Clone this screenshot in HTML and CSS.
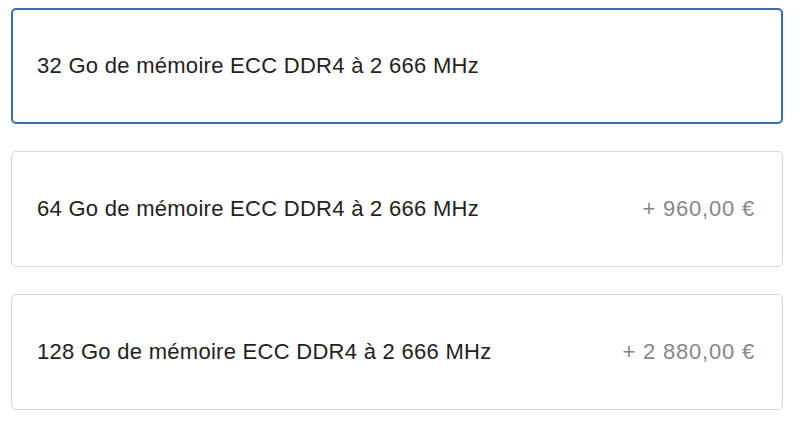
FILE: index.html
```html
<!DOCTYPE html>
<html lang="fr">
<head>
    <meta charset="UTF-8">
    <meta name="viewport" content="width=device-width, initial-scale=1.0">
    <title>Mémoire</title>
    <link rel="stylesheet" href="styles.css">
</head>
<body>
    <div class="options">
        <label class="option selected">
            <span class="name">32 Go de mémoire ECC DDR4 à 2 666 MHz</span>
        </label>
        <label class="option">
            <span class="name">64 Go de mémoire ECC DDR4 à 2 666 MHz</span>
            <span class="price">+ 960,00 €</span>
        </label>
        <label class="option">
            <span class="name">128 Go de mémoire ECC DDR4 à 2 666 MHz</span>
            <span class="price">+ 2 880,00 €</span>
        </label>
    </div>
</body>
</html>
```

FILE: styles.css
```css
body {
    font-family: "Liberation Sans", Arial, sans-serif;
    margin: 0;
    padding: 8px 17px 0 11px;
    background: #fff;
    color: #222;
}
.options {
    display: flex;
    flex-direction: column;
    gap: 27px;
}
.option {
    display: flex;
    align-items: center;
    justify-content: space-between;
    height: 116px;
    box-sizing: border-box;
    padding: 0 27px 0 25px;
    border: 1px solid #d6d6d6;
    border-radius: 5px;
    font-size: 22px;
    letter-spacing: 0.28px;
}
.option.selected {
    border: 2px solid #3a6db5;
    padding-left: 24px;
}
.price {
    color: #86868b;
    letter-spacing: 0.8px;
}
```
